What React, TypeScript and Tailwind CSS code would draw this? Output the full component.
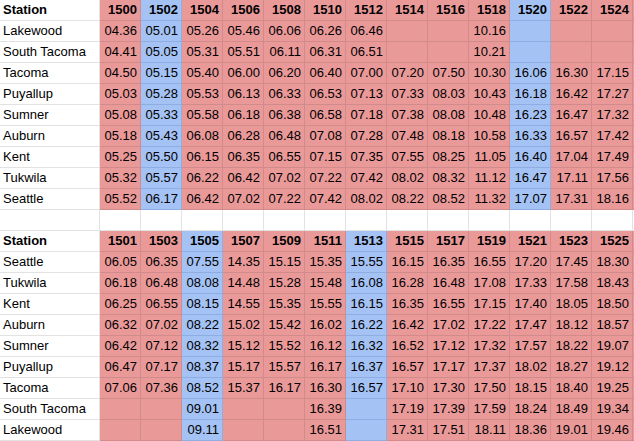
import React from "react";

type Section = {
  headers: string[];
  blue: number[];
  rows: [string, string[]][];
};

const top: Section = {
  headers: ["1500", "1502", "1504", "1506", "1508", "1510", "1512", "1514", "1516", "1518", "1520", "1522", "1524"],
  blue: [1, 10],
  rows: [
    ["Lakewood", ["04.36", "05.01", "05.26", "05.46", "06.06", "06.26", "06.46", "", "", "10.16", "", "", ""]],
    ["South Tacoma", ["04.41", "05.05", "05.31", "05.51", "06.11", "06.31", "06.51", "", "", "10.21", "", "", ""]],
    ["Tacoma", ["04.50", "05.15", "05.40", "06.00", "06.20", "06.40", "07.00", "07.20", "07.50", "10.30", "16.06", "16.30", "17.15"]],
    ["Puyallup", ["05.03", "05.28", "05.53", "06.13", "06.33", "06.53", "07.13", "07.33", "08.03", "10.43", "16.18", "16.42", "17.27"]],
    ["Sumner", ["05.08", "05.33", "05.58", "06.18", "06.38", "06.58", "07.18", "07.38", "08.08", "10.48", "16.23", "16.47", "17.32"]],
    ["Auburn", ["05.18", "05.43", "06.08", "06.28", "06.48", "07.08", "07.28", "07.48", "08.18", "10.58", "16.33", "16.57", "17.42"]],
    ["Kent", ["05.25", "05.50", "06.15", "06.35", "06.55", "07.15", "07.35", "07.55", "08.25", "11.05", "16.40", "17.04", "17.49"]],
    ["Tukwila", ["05.32", "05.57", "06.22", "06.42", "07.02", "07.22", "07.42", "08.02", "08.32", "11.12", "16.47", "17.11", "17.56"]],
    ["Seattle", ["05.52", "06.17", "06.42", "07.02", "07.22", "07.42", "08.02", "08.22", "08.52", "11.32", "17.07", "17.31", "18.16"]],
  ],
};

const bottom: Section = {
  headers: ["1501", "1503", "1505", "1507", "1509", "1511", "1513", "1515", "1517", "1519", "1521", "1523", "1525"],
  blue: [2, 6],
  rows: [
    ["Seattle", ["06.05", "06.35", "07.55", "14.35", "15.15", "15.35", "15.55", "16.15", "16.35", "16.55", "17.20", "17.45", "18.30"]],
    ["Tukwila", ["06.18", "06.48", "08.08", "14.48", "15.28", "15.48", "16.08", "16.28", "16.48", "17.08", "17.33", "17.58", "18.43"]],
    ["Kent", ["06.25", "06.55", "08.15", "14.55", "15.35", "15.55", "16.15", "16.35", "16.55", "17.15", "17.40", "18.05", "18.50"]],
    ["Auburn", ["06.32", "07.02", "08.22", "15.02", "15.42", "16.02", "16.22", "16.42", "17.02", "17.22", "17.47", "18.12", "18.57"]],
    ["Sumner", ["06.42", "07.12", "08.32", "15.12", "15.52", "16.12", "16.32", "16.52", "17.12", "17.32", "17.57", "18.22", "19.07"]],
    ["Puyallup", ["06.47", "07.17", "08.37", "15.17", "15.57", "16.17", "16.37", "16.57", "17.17", "17.37", "18.02", "18.27", "19.12"]],
    ["Tacoma", ["07.06", "07.36", "08.52", "15.37", "16.17", "16.30", "16.57", "17.10", "17.30", "17.50", "18.15", "18.40", "19.25"]],
    ["South Tacoma", ["", "", "09.01", "", "", "16.39", "", "17.19", "17.39", "17.59", "18.24", "18.49", "19.34"]],
    ["Lakewood", ["", "", "09.11", "", "", "16.51", "", "17.31", "17.51", "18.11", "18.36", "19.01", "19.46"]],
  ],
};

const redCell = "bg-[#ea9999] border-[#d28b8b]";
const blueCell = "bg-[#a4c2f4] border-[#8eaee3]";
const base = "h-[21px] border-r border-b text-right pr-[3px] leading-[20px] whitespace-nowrap overflow-hidden";

function Label({ text, bold }: { text: string; bold?: boolean }) {
  return (
    <div
      className={`h-[21px] border-r border-b border-[#e2e2e2] bg-white pl-[3px] leading-[20px] whitespace-nowrap overflow-hidden ${
        bold ? "font-bold" : ""
      }`}
    >
      {text}
    </div>
  );
}

function Cell({ text, blue, bold }: { text: string; blue: boolean; bold?: boolean }) {
  return <div className={`${base} ${blue ? blueCell : redCell} ${bold ? "font-bold" : ""}`}>{text}</div>;
}

function SectionRows({ s }: { s: Section }) {
  return (
    <>
      <Label text="Station" bold />
      {s.headers.map((h, i) => (
        <Cell key={h} text={h} blue={s.blue.includes(i)} bold />
      ))}
      <Cell text="" blue={false} />
      {s.rows.map(([name, vals]) => (
        <React.Fragment key={name}>
          <Label text={name} />
          {vals.map((v, i) => (
            <Cell key={i} text={v} blue={s.blue.includes(i)} />
          ))}
          <Cell text="" blue={false} />
        </React.Fragment>
      ))}
    </>
  );
}

export default function App() {
  return (
    <div className="w-[634px] h-[441px] overflow-hidden bg-white text-black text-[13px] font-['Liberation_Sans',Arial,sans-serif]">
      <div className="grid grid-cols-[100px_repeat(14,41px)]">
        <SectionRows s={top} />
        {Array.from({ length: 15 }).map((_, i) => (
          <div key={i} className="h-[21px] border-r border-b border-[#e2e2e2] bg-white" />
        ))}
        <SectionRows s={bottom} />
      </div>
    </div>
  );
}
